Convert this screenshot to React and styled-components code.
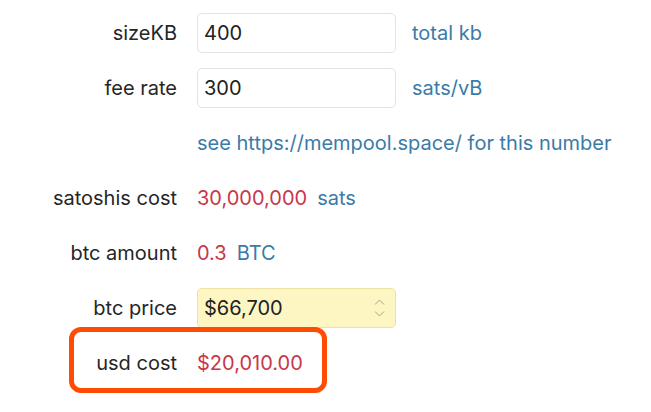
import React from 'react';
import styled, { createGlobalStyle } from 'styled-components';

const Global = createGlobalStyle`
  body {
    margin: 0;
    background: #fff;
    font-family: Inter, "Noto Sans", sans-serif;
  }
`;

const Form = styled.div`
  display: flex;
  flex-direction: column;
  gap: 15px;
  padding: 13px 0 29px;
  min-height: 100vh;
  box-sizing: border-box;
`;

const Row = styled.div`
  position: relative;
  display: flex;
  align-items: center;
  height: 40px;
  font-size: 20px;
`;

const Label = styled.div`
  width: 177px;
  margin-right: 20px;
  text-align: right;
  color: #262626;
  flex-shrink: 0;
`;

const Field = styled.input`
  box-sizing: border-box;
  width: 199px;
  height: 40px;
  padding: 0 6px;
  border: 1px solid #e3e3e3;
  border-radius: 5px;
  font: inherit;
  color: #222;
  background: #fff;
  outline: none;
`;

const PriceBox = styled.div`
  box-sizing: border-box;
  width: 199px;
  height: 40px;
  padding: 0 10px 0 6px;
  display: flex;
  align-items: center;
  justify-content: space-between;
  border: 1px solid #ede2a6;
  border-radius: 5px;
  background: #fdf6c2;
  color: #222;
`;

const Spinner = styled.div`
  display: flex;
  flex-direction: column;
  gap: 6px;
`;

const Unit = styled.span`
  color: #3a7ba8;
  margin-left: ${p => p.$gap || 0}px;
`;

const Value = styled.span`
  color: #c8374a;
`;

const Highlight = styled.div`
  position: absolute;
  left: 69px;
  top: -16px;
  width: 258px;
  height: 66px;
  box-sizing: border-box;
  border: 5px solid #ff4c05;
  border-radius: 12px;
  pointer-events: none;
`;

const Chevron = ({ up }) => (
  <svg width="11" height="6" viewBox="0 0 11 6">
    <path
      d={up ? 'M1 5.5 L5.5 1 L10 5.5' : 'M1 0.5 L5.5 5 L10 0.5'}
      fill="none"
      stroke="#aaa58e"
      strokeWidth="1"
    />
  </svg>
);

export default function App() {
  return (
    <>
      <Global />
      <Form>
        <Row>
          <Label>sizeKB</Label>
          <Field defaultValue="400" />
          <Unit $gap={16}>total kb</Unit>
        </Row>
        <Row>
          <Label>fee rate</Label>
          <Field defaultValue="300" />
          <Unit $gap={16}>sats/vB</Unit>
        </Row>
        <Row>
          <Label />
          <Unit>see https://mempool.space/ for this number</Unit>
        </Row>
        <Row>
          <Label>satoshis cost</Label>
          <Value>30,000,000</Value>
          <Unit $gap={10}>sats</Unit>
        </Row>
        <Row>
          <Label>btc amount</Label>
          <Value>0.3</Value>
          <Unit $gap={10}>BTC</Unit>
        </Row>
        <Row>
          <Label>btc price</Label>
          <PriceBox>
            <span>$66,700</span>
            <Spinner>
              <Chevron up />
              <Chevron />
            </Spinner>
          </PriceBox>
        </Row>
        <Row>
          <Label>usd cost</Label>
          <Value>$20,010.00</Value>
          <Highlight />
        </Row>
      </Form>
    </>
  );
}
